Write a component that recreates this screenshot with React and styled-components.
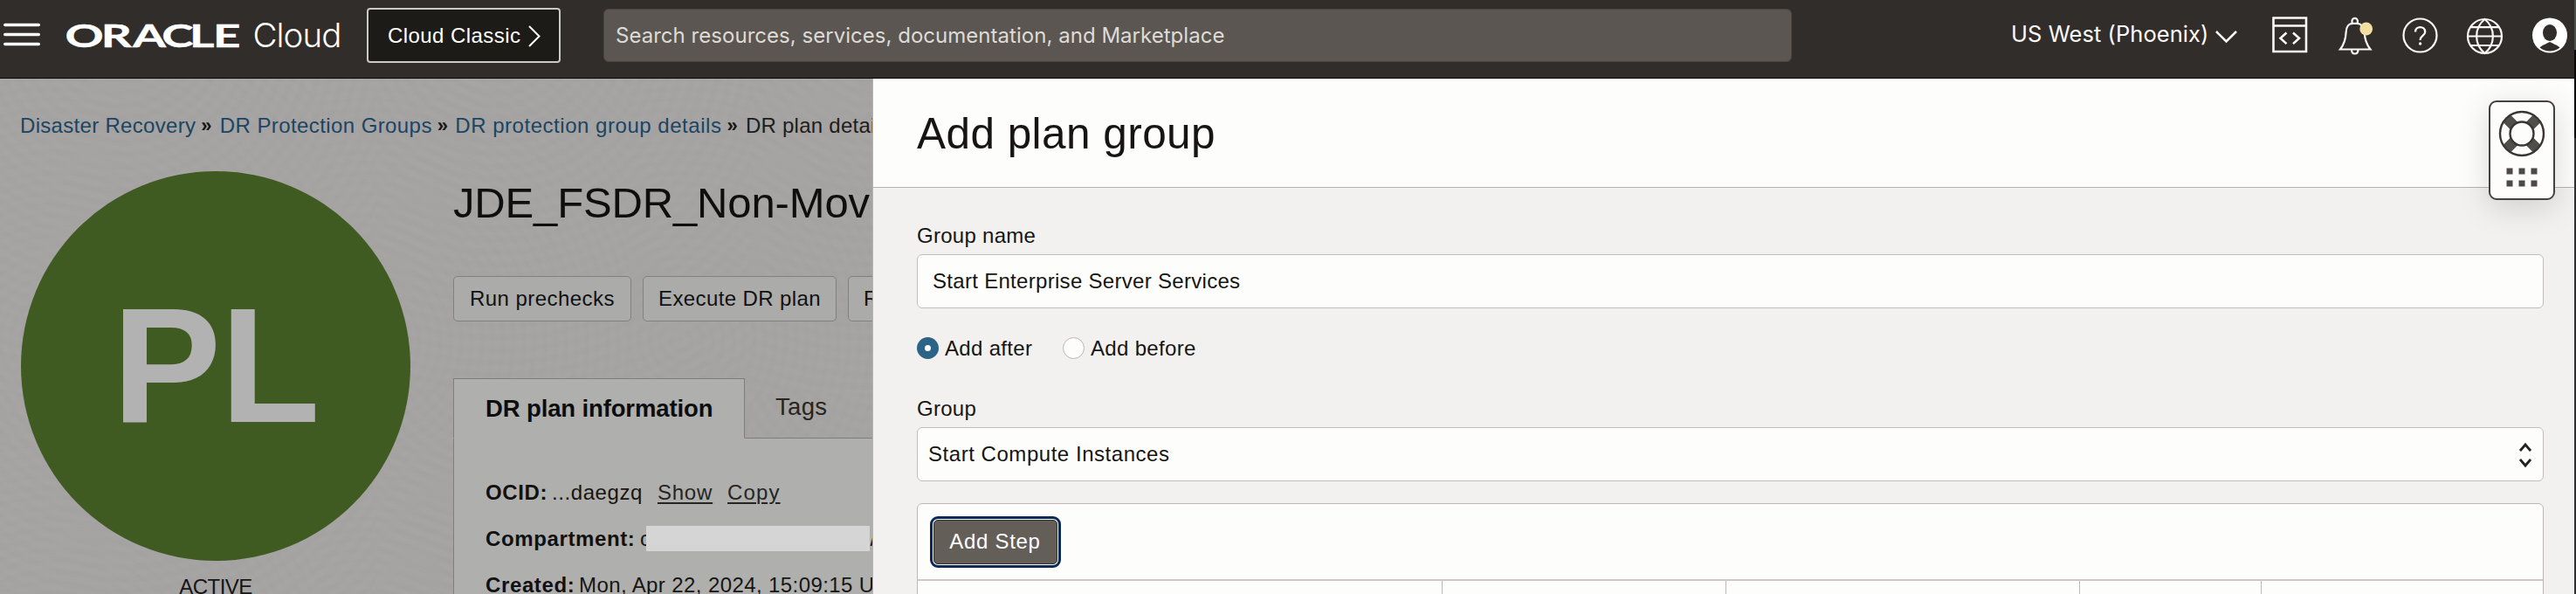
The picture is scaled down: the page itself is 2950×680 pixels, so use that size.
import React from 'react';
import styled, { createGlobalStyle } from 'styled-components';

const GlobalStyle = createGlobalStyle`
  *, *::before, *::after { box-sizing: border-box; }
  body {
    margin: 0;
    overflow: hidden;
    font-family: 'Liberation Sans', Arial, sans-serif;
    font-size: 24px;
    line-height: 28px;
    color: #161513;
  }
`;

const Screen = styled.div`
  display: flex;
  width: 2950px;
  height: 680px;
  overflow: hidden;
`;

const Console = styled.div`
  display: flex;
  flex-direction: column;
  width: 2948px;
`;

const WindowEdge = styled.div`
  flex: 1;
  background: linear-gradient(#4a524d 0 57px, #08090a 57px 158px, #2f3131 158px);
`;

/* ---------- top bar ---------- */

const TopBar = styled.header`
  display: flex;
  flex: none;
  height: 90px;
  padding-left: 4px;
  background: #312d2a;
  border-bottom: 1px solid #0b0605;
`;

const BarIcon = styled.svg.attrs({ height: 81 })`
  flex: none;
  display: block;
  margin-left: ${(p) => p.$gap || 0}px;
`;

const ClassicButton = styled.button`
  display: flex;
  align-items: center;
  width: 222px;
  height: 63px;
  margin: 9px 0 0 29px;
  padding: 0 0 0 22px;
  border: 2px solid #c9cac6;
  border-radius: 4px;
  background: #1c1b18;
  color: #fff;
  font: 24px 'Liberation Sans', Arial, sans-serif;
  letter-spacing: 0.44px;

  svg { margin-left: 8px; }
`;

const SearchBox = styled.div`
  width: 1361px;
  height: 61px;
  margin: 10px 0 0 49px;
  padding: 0 15px 0 13px;
  border: 1px solid #4a4541;
  border-radius: 6px;
  background: #5b5651;
  color: #dedbd7;
  font: 24px/60px Inter, sans-serif;
  letter-spacing: 0.03px;
`;

const Region = styled.div`
  display: flex;
  margin-left: 251px;
  color: #fbf9f8;
  font: 25.5px/78px Inter, sans-serif;
  letter-spacing: 0.05px;
`;

/* ---------- page behind the drawer ---------- */

const Main = styled.div`
  position: relative;
  flex: 1;
  display: flex;
  min-height: 0;
`;

const Page = styled.main`
  flex: none;
  width: 1000px;
  padding-left: 24px;
  overflow: hidden;
  white-space: nowrap;
  border-right: 1px solid #b7b4b2;
  background-color: #a5a4a3;
  background-image:
    repeating-radial-gradient(circle at 140px -60px, rgba(70, 70, 70, 0) 0, rgba(70, 70, 70, 0.022) 7px, rgba(70, 70, 70, 0) 14px),
    repeating-radial-gradient(circle at 60px 300px, rgba(255, 255, 255, 0) 0, rgba(255, 255, 255, 0.02) 6px, rgba(255, 255, 255, 0) 12px);
  background-size: 430px 360px, 360px 420px;
`;

const Breadcrumbs = styled.nav`
  display: flex;
  height: 106px;
  padding-top: 40px;
  margin-left: -1px;
`;

const Crumb = styled.span`
  flex: none;
  color: ${(p) => (p.$current ? '#1d1c1b' : '#1c4463')};
  letter-spacing: ${(p) => p.$track}px;
`;

const Separator = styled.span`
  flex: none;
  width: ${(p) => p.$width}px;
  padding-left: 6px;
  font-weight: bold;
  font-size: 22px;
  color: #161513;
`;

const Overview = styled.div`
  display: flex;
  align-items: flex-start;
`;

const StatusColumn = styled.div`
  flex: none;
  width: 446px;
  text-align: center;
  letter-spacing: -0.54px;
`;

const PlanBadge = styled.div`
  width: 446px;
  height: 446px;
  margin-bottom: 16px;
  border-radius: 50%;
  background: #3f5b22;
  color: #b2b2b2;
  font-weight: bold;
  font-size: 187px;
  line-height: 446px;
  letter-spacing: -1px;
`;

const Details = styled.div`
  flex: none;
  width: 700px;
  margin-left: 49px;
`;

const PageTitle = styled.h1`
  margin: 0;
  padding: 8px 0 56px 0;
  font-weight: normal;
  font-size: 49px;
  line-height: 56px;
  letter-spacing: -0.15px;
  color: #0f0e0e;
`;

const Actions = styled.div`
  display: flex;
  gap: 13px;
`;

const ActionButton = styled.button`
  flex: none;
  width: ${(p) => p.$width}px;
  height: 52px;
  padding: 0;
  border: 1px solid #82807e;
  border-radius: 5px;
  background: #ababa9;
  color: #111;
  font: 24px/28px 'Liberation Sans', Arial, sans-serif;
  letter-spacing: ${(p) => p.$track}px;
`;

const TabList = styled.div`
  display: flex;
  margin-top: 65px;
`;

const Tab = styled.div`
  flex: none;
  width: ${(p) => (p.$active ? 334 : 366)}px;
  height: 69px;
  border: 1px solid #7f7e7c;
  font-size: 27.5px;
  ${(p) =>
    p.$active
      ? `border-bottom-color: transparent; background: #afafad; font-weight: bold;
         letter-spacing: -0.13px; padding: 20px 0 0 36px; color: #0d0d0d;`
      : `border-width: 0 0 1px; padding: 19px 0 0 35px; letter-spacing: 0.3px; color: #262524;`}
`;

const InfoCard = styled.div`
  height: 300px;
  padding: 48px 0 0 36px;
  border-left: 1px solid #7f7e7c;
  background: #afafad;
`;

const InfoRow = styled.div`
  display: flex;
  height: 53px;
`;

const Label = styled.b`
  flex: none;
  width: ${(p) => p.$width}px;
  letter-spacing: 0.62px;
  color: #111;
`;

const Value = styled.span`
  flex: none;
  letter-spacing: ${(p) => p.$track ?? 0.4}px;
`;

const TextLink = styled.a`
  margin-left: 17px;
  color: #262524;
  text-decoration: underline;
  text-underline-offset: 3px;
  text-decoration-thickness: 2px;
  letter-spacing: ${(p) => p.$track}px;
`;

const Redaction = styled.span`
  flex: none;
  width: 256px;
  height: 29px;
  margin: -1px 0 0 -5px;
  background: #d5d5d5;
  z-index: 1;
`;

/* ---------- drawer ---------- */

const Drawer = styled.section`
  flex: 1;
  display: flex;
  flex-direction: column;
  overflow: hidden;
  background: #f3f1f0;
`;

const DrawerHeader = styled.header`
  flex: none;
  height: 125px;
  padding: 35px 0 0 50px;
  border-bottom: 1px solid #b9b4b1;
  background: #fdfdfc;
`;

const DrawerTitle = styled.h2`
  margin: 0;
  font-weight: normal;
  font-size: 49.5px;
  line-height: 56px;
  letter-spacing: 0.45px;
`;

const Form = styled.form`
  display: flex;
  flex-direction: column;
  width: 1863px;
  margin-left: 50px;
`;

const FieldLabel = styled.label`
  height: 35px;
  margin-top: ${(p) => p.$top}px;
  letter-spacing: 0.28px;
`;

const Field = styled.div`
  flex: none;
  display: flex;
  justify-content: space-between;
  height: 62px;
  padding: 0 13px 0 ${(p) => p.$inset}px;
  border: 1px solid #c2bdba;
  border-radius: 6px;
  background: #fdfdfc;
  line-height: 60px;
  letter-spacing: ${(p) => p.$track}px;
`;

const RadioRow = styled.div`
  display: flex;
  margin-top: 33px;
  height: 26px;
  line-height: 26px;
`;

const RadioOption = styled.label`
  display: flex;
  gap: 7px;
  width: 167px;
  letter-spacing: 0.32px;
  white-space: nowrap;
`;

const RadioDot = styled.span`
  flex: none;
  width: 25px;
  height: 25px;
  border-radius: 50%;
  background: #fdfdfc;
  border: ${(p) => (p.$checked ? '9px solid #2c6487' : '1px solid #bab6b3')};
`;

const StepTable = styled.div`
  height: 220px;
  margin-top: 25px;
  border: 1px solid #bcb7b4;
  border-radius: 6px 6px 0 0;
  background: #fdfdfc;
`;

const StepToolbar = styled.div`
  height: 88px;
  padding: 18px 0 0 18px;
  border-bottom: 2px solid #ccc9c7;
`;

const AddStepButton = styled.button`
  width: 142px;
  height: 51px;
  padding: 0 1px 1px 0;
  border: 1px solid #35302d;
  border-radius: 5px;
  outline: 3px solid #0b2a56;
  outline-offset: 1px;
  background: #645e59;
  color: #fff;
  font: 24px/28px 'Liberation Sans', Arial, sans-serif;
  letter-spacing: 0.7px;
`;

const StepColumns = styled.div`
  display: grid;
  grid-template-columns: 601px 325px 405px 208px 1fr;
  height: 131px;
`;

const StepColumn = styled.div`
  border-right: 1px solid #bcb9b7;
  &:last-child { border-right: 0; }
`;

/* ---------- floating support widget ---------- */

const SupportWidget = styled.aside`
  position: absolute;
  top: 25px;
  left: 2850px;
  width: 76px;
  height: 114px;
  border: 2px solid #45413e;
  border-radius: 9px;
  background: #fdfdfc;
  box-shadow: 0 8px 36px rgba(0, 0, 0, 0.15);

  svg { display: block; }
`;

const MenuIcon = () => (
  <BarIcon width="42" viewBox="0 0 42 81" stroke="#fff" strokeWidth="3.4" strokeLinecap="round">
    <path d="M1.7 28.5h38.6M1.7 39.5h38.6M1.7 50.5h38.6" />
  </BarIcon>
);

const Logo = () => (
  <BarIcon $gap={30} width="315" viewBox="76 0 315 81" fill="#fff">
    <text
      transform="scale(1.5 1)"
      x="49.6 77.2 101.3 123.5 144.7 162.7"
      y="54"
      fontFamily="Lato, sans-serif"
      fontWeight="700"
      fontSize="36.5"
      stroke="#fff"
      strokeWidth="0.4"
    >
      ORACLE
    </text>
    <text x="289.5" y="54.2" fontFamily="Inter, sans-serif" fontWeight="300" fontSize="38.5" letterSpacing="-0.95">
      Cloud
    </text>
  </BarIcon>
);

const HeaderIcons = () => (
  <BarIcon $gap={38} width="340" viewBox="2602 0 340 81" fill="none" stroke="#fbf9f8" strokeWidth="2.2">
    <path d="M2604.5 20.5h37.5v38.5h-37.5zM2604.5 29.5h37.5" strokeWidth="2.6" />
    <path d="M2619.5 37.5l-7 6.3 7 6.3M2627 37.5l7 6.3-7 6.3" strokeWidth="2.6" />
    <path d="M2694.5 27v-3a3.2 3.2 0 0 1 6.4 0v3M2681 56.5h34.5c-5-6.5-6.5-12-6.8-19.5c-.3-6.5-4.3-10.2-8.5-10.2h-4.9c-4.2 0-7.5 3.7-7.7 10.2c-.3 7.5-1.6 13-6.6 19.5zM2694 57c0 6 7.5 6 7.5 0" />
    <circle cx="2710.7" cy="33" r="7.4" fill="#f3dfa2" stroke="none" />
    <circle cx="2772.5" cy="40.5" r="19" />
    <path d="M2767 36.5c0-7.2 11.2-7.2 11.2 0c0 4.6-5.6 4.4-5.6 9.4" strokeWidth="2.3" />
    <circle cx="2772.6" cy="50" r="1.7" fill="#fbf9f8" stroke="none" />
    <circle cx="2846.5" cy="41.5" r="19.5" />
    <path d="M2827 41.5h39M2831 31.2h31M2831 52h31M2846.5 22c-12.5 10-12.5 29 0 39c12.5-10 12.5-29 0-39z" />
    <circle cx="2921" cy="40.5" r="20" fill="#fff" stroke="none" />
    <ellipse cx="2921" cy="37.5" rx="8" ry="9.5" fill="#312d2a" stroke="none" />
    <path d="M2909.5 54.5c4-3.5 7-4 11.5-6.5c4.5 2.5 7.5 3 11.5 6.5c-6.5 5.3-16.5 5.3-23 0z" fill="#312d2a" stroke="none" />
  </BarIcon>
);

const SupportIcon = () => (
  <svg width="72" height="110" viewBox="2852 117 72 110">
    <path
      d="M2871 136l34 34M2905 136l-34 34"
      stroke="#504e4a"
      strokeWidth="12"
    />
    <circle cx="2888" cy="153" r="25" fill="none" stroke="#383532" strokeWidth="2.4" />
    <circle cx="2888" cy="153" r="13.5" fill="#fdfdfc" stroke="#383532" strokeWidth="2.4" />
    {[2874, 2888, 2902].map((x) =>
      [196, 210].map((y) => <rect key={`${x}-${y}`} x={x - 3.5} y={y - 3.5} width="7" height="7" fill="#4c4a47" />)
    )}
  </svg>
);

export default function App() {
  return (
    <Screen>
      <GlobalStyle />
      <Console>
        <TopBar>
          <MenuIcon />
          <Logo />
          <ClassicButton type="button">
            Cloud Classic
            <svg width="16" height="28" viewBox="0 0 16 28" fill="none" stroke="#fff" strokeWidth="2">
              <path d="M2 3l11.5 11.5L2 26" />
            </svg>
          </ClassicButton>
          <SearchBox>Search resources, services, documentation, and Marketplace</SearchBox>
          <Region>US West (Phoenix)</Region>
          <BarIcon $gap={7} width="27" viewBox="0 0 27 81" fill="none" stroke="#fbf9f8" strokeWidth="2.6">
            <path d="M2 36l11.5 11.5L25 36" />
          </BarIcon>
          <HeaderIcons />
        </TopBar>
        <Main>
          <Page>
            <Breadcrumbs>
              <Crumb $track={0.31}>Disaster Recovery</Crumb>
              <Separator $width={27.5}>»</Separator>
              <Crumb $track={0.41}>DR Protection Groups</Crumb>
              <Separator $width={26.5}>»</Separator>
              <Crumb $track={0.53}>DR protection group details</Crumb>
              <Separator $width={27.5}>»</Separator>
              <Crumb $current $track={0.25}>DR plan details</Crumb>
            </Breadcrumbs>
            <Overview>
              <StatusColumn>
                <PlanBadge>PL</PlanBadge>
                ACTIVE
              </StatusColumn>
              <Details>
                <PageTitle>JDE_FSDR_Non-Mov</PageTitle>
                <Actions>
                  <ActionButton type="button" $width={204} $track={0.45}>Run prechecks</ActionButton>
                  <ActionButton type="button" $width={222} $track={0.38}>Execute DR plan</ActionButton>
                  <ActionButton type="button" $width={123} $track={0.4}>Refresh</ActionButton>
                </Actions>
                <TabList>
                  <Tab $active>DR plan information</Tab>
                  <Tab>Tags</Tab>
                </TabList>
                <InfoCard>
                  <InfoRow>
                    <Label $width={76}>OCID:</Label>
                    <Value $track={0.58}>...daegzq</Value>
                    <TextLink $track={0.77}>Show</TextLink>
                    <TextLink $track={1.1}>Copy</TextLink>
                  </InfoRow>
                  <InfoRow>
                    <Label $width={177}>Compartment:</Label>
                    <Value>c</Value>
                    <Redaction />
                    <Value>/</Value>
                  </InfoRow>
                  <InfoRow>
                    <Label $width={107}>Created:</Label>
                    <Value>Mon, Apr 22, 2024, 15:09:15 UTC</Value>
                  </InfoRow>
                </InfoCard>
              </Details>
            </Overview>
          </Page>
          <Drawer>
            <DrawerHeader>
              <DrawerTitle>Add plan group</DrawerTitle>
            </DrawerHeader>
            <Form>
              <FieldLabel $top={41}>Group name</FieldLabel>
              <Field $inset={17} $track={0.3}>Start Enterprise Server Services</Field>
              <RadioRow>
                <RadioOption><RadioDot $checked />Add after</RadioOption>
                <RadioOption><RadioDot />Add before</RadioOption>
              </RadioRow>
              <FieldLabel $top={42}>Group</FieldLabel>
              <Field $inset={12} $track={0.54}>
                Start Compute Instances
                <svg width="14" height="60" viewBox="0 0 14 60" fill="none" stroke="#222" strokeWidth="2.8">
                  <path d="M1 26l6-7 6 7M1 36l6 7 6-7" />
                </svg>
              </Field>
              <StepTable>
                <StepToolbar>
                  <AddStepButton type="button">Add Step</AddStepButton>
                </StepToolbar>
                <StepColumns>
                  <StepColumn />
                  <StepColumn />
                  <StepColumn />
                  <StepColumn />
                  <StepColumn />
                </StepColumns>
              </StepTable>
            </Form>
          </Drawer>
          <SupportWidget>
            <SupportIcon />
          </SupportWidget>
        </Main>
      </Console>
      <WindowEdge />
    </Screen>
  );
}
